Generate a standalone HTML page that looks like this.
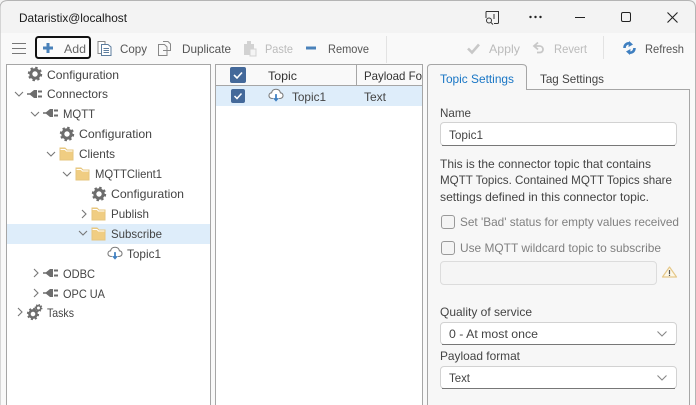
<!DOCTYPE html>
<html><head><meta charset="utf-8"><style>
html,body{margin:0;padding:0;width:696px;height:405px;overflow:hidden;background:#f9f9f9}
svg{display:block}
text{font-family:"Liberation Sans",sans-serif;font-size:12px}
</style></head><body>
<svg width="696" height="405" viewBox="0 0 696 405" xmlns="http://www.w3.org/2000/svg">
<defs>
<g id="gear"><circle r="4.2" fill="none" stroke="#6d6d6d" stroke-width="3"/><circle r="6" fill="none" stroke="#6d6d6d" stroke-width="2.4" stroke-dasharray="2.4 2.31"/></g>
<g id="plug"><path d="M-8-.8H-5L-1-4H2V4H-1L-5 .8H-8Z" fill="#6d6d6d"/><path d="M3-2.500H7M3 2.500H7" stroke="#6d6d6d" stroke-width="2"/></g>
<g id="folder"><path d="M-7-6H-2L0-4H6V6H-7Z" fill="#f0cd82" stroke="#e6c57e"/><path d="M-6.500-4.500H-2L-.5-3H5.500" fill="none" stroke="#fff" stroke-width="1"/></g>
<g id="cloud"><g transform="scale(.88)"><path d="M-3.500 4C-6.500 4-8 2.500-8 .5-8-1.500-6.500-2.500-5-2.500-4.500-5-2.500-6.500 0-6.500 2.500-6.500 4.500-5 5-2.500 6.500-2.500 8-1.200 8 .5 8 2.500 6.500 4 3.500 4" fill="#fff" stroke="#7b7b7b" stroke-width="1.200"/><path d="M0-1V6" stroke="#3f7fc0" stroke-width="2"/><path d="M-3.500 3.500 0 7.500 3.500 3.500Z" fill="#3f7fc0"/></g></g>
<path id="cd" d="M-4-2 0 2 4-2" fill="none" stroke="#777" stroke-width="1.100"/>
<path id="cr" d="M-2-4 2 0-2 4" fill="none" stroke="#777" stroke-width="1.100"/>
</defs>

<rect width="696" height="405" fill="#f9f9f9"/>
<rect width="696" height="33" fill="#f3f3f3"/>
<path d="M0 405V8Q0 .5 8 .5H688Q695.500 .5 695.500 8V405" fill="none" stroke="#b4b4b4"/>

<text x="19" y="22" textLength="108" lengthAdjust="spacingAndGlyphs" fill="#1a1a1a">Dataristix@localhost</text>

<!-- caption -->
<path d="M486 11.500H498.500V22.500Q498.500 23.500 497.500 23.500H494M486 11.500V18" fill="none" stroke="#333" stroke-width="1"/>
<path d="M494 14V19" stroke="#333"/><circle cx="489" cy="20.500" r="2.500" fill="none" stroke="#333"/><path d="M491 22.500 493 24.500" stroke="#333"/>
<circle cx="530.500" cy="17" r="1.200" fill="#222"/><circle cx="535.500" cy="17" r="1.200" fill="#222"/><circle cx="540.500" cy="17" r="1.200" fill="#222"/>
<path d="M575 17.500H585" stroke="#222"/>
<rect x="621.500" y="12.500" width="9" height="9" rx="1.500" fill="none" stroke="#222"/>
<path d="M667.500 12.500 677.500 22.500M677.500 12.500 667.500 22.500" stroke="#222" stroke-width="1.100"/>

<!-- toolbar -->
<path d="M12 43.500H26M12 48.500H26M12 53.500H26" stroke="#777" stroke-width="1.100"/>
<rect x="36" y="37" width="54" height="21" rx="2.500" fill="#fbfbfb" stroke="#111" stroke-width="2"/>
<path d="M48 43V53M43 48H53" stroke="#4a82ba" stroke-width="3"/>
<text x="64" y="53" textLength="22" lengthAdjust="spacingAndGlyphs" fill="#666">Add</text>
<path d="M98 41.500H105V53.500H98Z" fill="#fff" stroke="#888"/><path d="M101.500 44.500H108L111 47V55.500H101.500Z" fill="#fff" stroke="#5d7d9e"/><path d="M103.500 48.500H109M103.500 50.500H109M103.500 52.500H109" stroke="#5d7d9e"/>
<text x="120" y="53" textLength="27" lengthAdjust="spacingAndGlyphs" fill="#555">Copy</text>
<path d="M163 41.500H168L170.500 44V50.500H163M158.500 44.500H164.500L167 47V55.500H158.500Z" fill="#f9f9f9" stroke="#888"/>
<text x="182" y="53" textLength="49" lengthAdjust="spacingAndGlyphs" fill="#555">Duplicate</text>
<path d="M244 44H254V55H244Z" fill="#d2d2d2"/><rect x="247" y="41" width="4" height="4" fill="#d2d2d2"/><rect x="250" y="49" width="6" height="7" fill="#f4f4f4" stroke="#d2d2d2"/>
<text x="265" y="53" textLength="28" lengthAdjust="spacingAndGlyphs" fill="#bbb">Paste</text>
<path d="M306 48H316" stroke="#4a82ba" stroke-width="3"/>
<text x="328" y="53" textLength="41" lengthAdjust="spacingAndGlyphs" fill="#555">Remove</text>
<path d="M386.500 36V63" stroke="#e3e3e3"/>
<path d="M468 48.500 472 52.500 479 44.500" fill="none" stroke="#c8c8c8" stroke-width="2.600"/>
<text x="489" y="53" textLength="31" lengthAdjust="spacingAndGlyphs" fill="#bbb">Apply</text>
<path d="M535 46H539.500C541.500 46 543 47.500 543 49.500S541.500 52.500 539.500 52.500H537M538 42.500 534 46 538 49.500" fill="none" stroke="#c8c8c8" stroke-width="1.800"/>
<text x="554" y="53" textLength="33" lengthAdjust="spacingAndGlyphs" fill="#bbb">Revert</text>
<path d="M603.500 36V59" stroke="#e3e3e3"/>
<path d="M624.500 48C624.500 44.800 627 42.800 630 43.500M634.500 48C634.500 51.200 632 53.200 629 52.500" fill="none" stroke="#3f7fc0" stroke-width="2.600"/>
<path d="M629 41 633 44.500 628.500 47ZM630 55 626 51.500 630.500 49Z" fill="#3f7fc0"/>
<text x="645" y="53" textLength="39" lengthAdjust="spacingAndGlyphs" fill="#555">Refresh</text>

<!-- tree -->
<rect x="6.500" y="64.500" width="204" height="341" fill="#fff" stroke="#a6a6a6"/>
<rect x="7" y="224" width="203" height="20" fill="#deedfa"/>
<use href="#gear" x="35" y="74"/><text x="47" y="79" textLength="72" lengthAdjust="spacingAndGlyphs" fill="#444">Configuration</text>
<use href="#cd" x="19" y="94"/><use href="#plug" x="35" y="94"/><text x="47" y="98" textLength="61" lengthAdjust="spacingAndGlyphs" fill="#444">Connectors</text>
<use href="#cd" x="35" y="114"/><use href="#plug" x="51" y="113"/><text x="63" y="118" textLength="32" lengthAdjust="spacingAndGlyphs" fill="#444">MQTT</text>
<use href="#gear" x="67" y="134"/><text x="79" y="138" textLength="73" lengthAdjust="spacingAndGlyphs" fill="#444">Configuration</text>
<use href="#cd" x="51" y="154"/><use href="#folder" x="67" y="154"/><text x="79" y="158" textLength="36" lengthAdjust="spacingAndGlyphs" fill="#444">Clients</text>
<use href="#cd" x="67" y="174"/><use href="#folder" x="83" y="174"/><text x="95" y="178" textLength="67" lengthAdjust="spacingAndGlyphs" fill="#444">MQTTClient1</text>
<use href="#gear" x="99" y="194"/><text x="111" y="198" textLength="73" lengthAdjust="spacingAndGlyphs" fill="#444">Configuration</text>
<use href="#cr" x="84" y="214"/><use href="#folder" x="99" y="214"/><text x="111" y="218" textLength="38" lengthAdjust="spacingAndGlyphs" fill="#444">Publish</text>
<use href="#cd" x="83" y="233"/><use href="#folder" x="99" y="234"/><text x="111" y="238" textLength="51" lengthAdjust="spacingAndGlyphs" fill="#444">Subscribe</text>
<use href="#cloud" x="115" y="253"/><text x="127" y="258" textLength="34" lengthAdjust="spacingAndGlyphs" fill="#444">Topic1</text>
<use href="#cr" x="36" y="273"/><use href="#plug" x="51" y="273"/><text x="63" y="278" textLength="32" lengthAdjust="spacingAndGlyphs" fill="#444">ODBC</text>
<use href="#cr" x="36" y="293"/><use href="#plug" x="51" y="293"/><text x="63" y="298" textLength="42" lengthAdjust="spacingAndGlyphs" fill="#444">OPC UA</text>
<use href="#cr" x="20" y="312"/><g transform="translate(33 314) scale(.85)"><use href="#gear"/></g><g transform="translate(38.500 308) scale(.55)"><use href="#gear"/></g><text x="47" y="317" textLength="27" lengthAdjust="spacingAndGlyphs" fill="#444">Tasks</text>

<!-- list -->
<rect x="215.500" y="64.500" width="207" height="341" fill="#fff" stroke="#a6a6a6"/>
<rect x="216" y="65" width="206" height="21" fill="#f9f9f9"/>
<path d="M216 85.500H422M356.500 65V85" stroke="#a6a6a6"/>
<rect x="216" y="86" width="206" height="20" fill="#deedfa"/>
<rect x="230" y="67" width="16" height="16" rx="2" fill="#44699a"/><path d="M234 75 237 78 242 72.500" fill="none" stroke="#fff" stroke-width="1.600"/>
<rect x="231" y="89" width="14" height="14" rx="2" fill="#44699a"/><path d="M234.500 96 237 98.500 241.500 93.500" fill="none" stroke="#fff" stroke-width="1.500"/>
<text x="268" y="80" textLength="29" lengthAdjust="spacingAndGlyphs" fill="#333">Topic</text>
<text x="364" y="80" textLength="58" lengthAdjust="spacingAndGlyphs" fill="#333">Payload Fo</text>
<use href="#cloud" x="276" y="95"/><text x="292" y="101" textLength="34" lengthAdjust="spacingAndGlyphs" fill="#444">Topic1</text>
<text x="364" y="101" textLength="22" lengthAdjust="spacingAndGlyphs" fill="#444">Text</text>

<!-- tabs -->
<path d="M427.500 405V89.500H689.500V405" fill="#f7f7f7" stroke="#a6a6a6"/>
<path d="M427.500 90V68Q427.500 64.500 431 64.500H522Q526.500 64.500 526.500 68V90" fill="#f7f7f7" stroke="#a6a6a6"/>
<rect x="428" y="85" width="98" height="6" fill="#f7f7f7"/>
<text x="440" y="83" textLength="74" lengthAdjust="spacingAndGlyphs" fill="#1976c5">Topic Settings</text>
<text x="540" y="83" textLength="64" lengthAdjust="spacingAndGlyphs" fill="#444">Tag Settings</text>

<text x="440" y="117" textLength="31" lengthAdjust="spacingAndGlyphs" fill="#444">Name</text>
<rect x="440.500" y="122.500" width="236" height="23" rx="3.500" fill="#fff" stroke="#d2d2d2"/><path d="M442 145.500H675" stroke="#777"/>
<text x="449" y="139" textLength="34" lengthAdjust="spacingAndGlyphs" fill="#444">Topic1</text>
<text x="440" y="168" textLength="211" lengthAdjust="spacingAndGlyphs" fill="#444">This is the connector topic that contains</text>
<text x="440" y="184" textLength="232" lengthAdjust="spacingAndGlyphs" fill="#444">MQTT Topics. Contained MQTT Topics share</text>
<text x="440" y="201" textLength="209" lengthAdjust="spacingAndGlyphs" fill="#444">settings defined in this connector topic.</text>
<rect x="441.500" y="215.500" width="13" height="13" rx="2.500" fill="#f4f4f4" stroke="#999"/>
<text x="460" y="226" textLength="219" lengthAdjust="spacingAndGlyphs" fill="#808080">Set 'Bad' status for empty values received</text>
<rect x="441.500" y="241.500" width="13" height="13" rx="2.500" fill="#f4f4f4" stroke="#999"/>
<text x="460" y="252" textLength="201" lengthAdjust="spacingAndGlyphs" fill="#808080">Use MQTT wildcard topic to subscribe</text>
<rect x="440.500" y="261.500" width="216" height="23" rx="3.500" fill="#f5f5f5" stroke="#dcdcdc"/>
<path d="M669.500 267 676.500 277H662.500Z" fill="#fdf8e8" stroke="#e5c88b" stroke-width="1.200" stroke-linejoin="round"/><path d="M669.500 270V274M669.500 274.800V276" stroke="#555" stroke-width="1.200"/>

<text x="440" y="316" textLength="92" lengthAdjust="spacingAndGlyphs" fill="#444">Quality of service</text>
<rect x="440.500" y="322.500" width="236" height="22" rx="3.500" fill="#fff" stroke="#d2d2d2"/><path d="M442 344.500H675" stroke="#777"/>
<text x="449" y="338" textLength="89" lengthAdjust="spacingAndGlyphs" fill="#444">0 - At most once</text>
<path d="M657.500 331.500 662 336 666.500 331.500" fill="none" stroke="#888" stroke-width="1.100"/>
<text x="440" y="360" textLength="80" lengthAdjust="spacingAndGlyphs" fill="#444">Payload format</text>
<rect x="440.500" y="366.500" width="236" height="22" rx="3.500" fill="#fff" stroke="#d2d2d2"/><path d="M442 388.500H675" stroke="#777"/>
<text x="449" y="382" textLength="21" lengthAdjust="spacingAndGlyphs" fill="#444">Text</text>
<path d="M657.500 375.500 662 380 666.500 375.500" fill="none" stroke="#888" stroke-width="1.100"/>
</svg>
</body></html>
